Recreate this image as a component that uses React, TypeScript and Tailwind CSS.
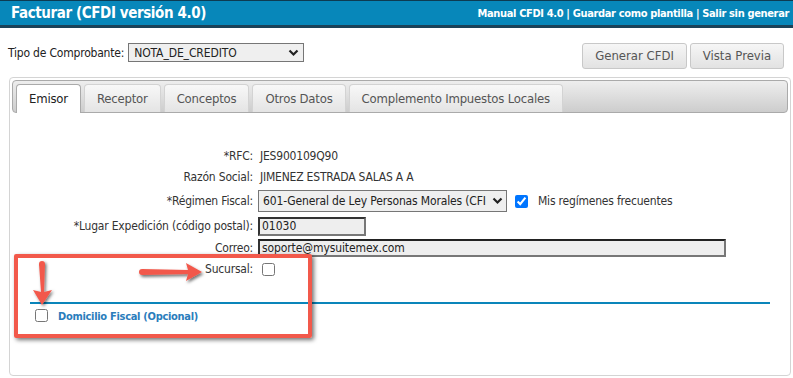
import React from "react";

const F = { fontFamily: "'DejaVu Sans Condensed', 'Noto Sans', sans-serif" };

function Chevron() {
  return (
    <svg width="11" height="8" viewBox="0 0 11 8">
      <path d="M1.5 1.5 L5.5 5.5 L9.5 1.5" fill="none" stroke="#222" strokeWidth="2.2" />
    </svg>
  );
}

function Row({ label, h, children }: { label: React.ReactNode; h: string; children?: React.ReactNode }) {
  return (
    <div className={`flex items-center gap-[5px] ${h}`}>
      <div className="w-[241px] shrink-0 text-right text-[12px] tracking-[-0.2px] text-[#333]">{label}</div>
      {children}
    </div>
  );
}

export default function App() {
  const tabs = ["Emisor", "Receptor", "Conceptos", "Otros Datos", "Complemento Impuestos Locales"];
  return (
    <div className="relative w-[793px] h-[378px] overflow-hidden bg-white" style={F}>
      {/* header */}
      <div className="h-[28px] flex items-center justify-between pl-[11px] pr-[4px] bg-[#0787ba] border-t border-[#0d3b52] border-b-[3px] border-b-[#1b4258]">
        <div className="text-white font-bold text-[15px] tracking-[-0.4px] leading-none">Facturar (CFDI versión 4.0)</div>
        <div className="text-white font-bold text-[11px] tracking-[-0.35px] leading-none">
          Manual CFDI 4.0 | Guardar como plantilla | Salir sin generar
        </div>
      </div>

      {/* top row */}
      <div className="flex justify-between h-[49px] pl-[8px] pr-[9px]">
        <div className="flex items-center gap-[4px] h-[39px] pt-[10px]">
          <span className="text-[12px] tracking-[-0.2px] text-[#222]">Tipo de Comprobante:</span>
          <div className="w-[176px] h-[19px] flex items-center justify-between pl-[5px] pr-[4px] bg-[#efefef] border border-[#767676] text-[12px] tracking-[-0.1px] text-[#222]">
            <span>NOTA_DE_CREDITO</span>
            <Chevron />
          </div>
        </div>
        <div className="flex gap-[3px] pt-[15px]">
          <div className="w-[105px] h-[26px] flex items-center justify-center rounded-[3px] border border-[#c8c8c8] bg-gradient-to-b from-[#f6f6f6] to-[#e2e2e2] text-[13px] text-[#555]">
            Generar CFDI
          </div>
          <div className="w-[94px] h-[26px] flex items-center justify-center rounded-[3px] border border-[#c8c8c8] bg-gradient-to-b from-[#f6f6f6] to-[#e2e2e2] text-[13px] text-[#555]">
            Vista Previa
          </div>
        </div>
      </div>

      {/* panel */}
      <div className="ml-[9px] w-[782px] h-[299px] border border-[#d4d4d4] rounded-[4px] p-[2px]">
        <div className="h-[33px] flex items-end gap-[3px] pl-[3px] rounded-[4px] border border-[#aaaaaa] bg-gradient-to-b from-[#eeeeee] to-[#cdcdcd]">
          {tabs.map((t, i) =>
            i === 0 ? (
              <div
                key={t}
                className="h-[29px] -mb-px px-[12px] flex items-center rounded-t-[4px] border border-b-0 border-[#aaaaaa] bg-white text-[13px] tracking-[-0.2px] text-[#222]"
              >
                {t}
              </div>
            ) : (
              <div
                key={t}
                className="h-[28px] px-[12px] flex items-center rounded-t-[4px] border border-b-0 border-[#d3d3d3] bg-gradient-to-b from-[#f8f8f8] to-[#e4e4e4] text-[13px] tracking-[-0.2px] text-[#555]"
              >
                {t}
              </div>
            )
          )}
        </div>

        <div className="pt-[33px]">
          <Row label="*RFC:" h="h-[20px]">
            <span className="pl-[2px] text-[12px] tracking-[-0.2px] text-[#333]">JES900109Q90</span>
          </Row>
          <Row label="Razón Social:" h="h-[22px]">
            <span className="pl-[2px] text-[12px] tracking-[-0.2px] text-[#333]">JIMENEZ ESTRADA SALAS A A</span>
          </Row>
          <Row label="*Régimen Fiscal:" h="h-[26px]">
            <div className="w-[249px] h-[22px] flex items-center justify-between pl-[4px] pr-[3px] bg-[#efefef] border border-[#767676] text-[12px] tracking-[-0.15px] text-[#222] overflow-hidden whitespace-nowrap">
              <span className="overflow-hidden">601-General de Ley Personas Morales (CFI</span>
              <Chevron />
            </div>
            <input type="checkbox" defaultChecked className="ml-[3px] w-[13px] h-[13px] accent-[#0075ff]" />
            <span className="ml-[5px] text-[12px] tracking-[-0.2px] text-[#333]">Mis regímenes frecuentes</span>
          </Row>
          <Row label="*Lugar Expedición (código postal):" h="h-[24px]">
            <div className="w-[108px] h-[19px] flex items-center pl-[2px] bg-[#eeeeee] border-2 border-t-[#333] border-l-[#333] border-r-[#777] border-b-[#777] text-[12px] text-[#222]">
              01030
            </div>
          </Row>
          <Row label="Correo:" h="h-[20px]">
            <div className="w-[468px] h-[18px] flex items-center pl-[2px] bg-[#eeeeee] border-2 border-t-[#222] border-l-[#333] border-r-[#777] border-b-[#777] text-[12px] tracking-[-0.1px] text-[#222]">
              soporte@mysuitemex.com
            </div>
          </Row>
          <Row label="Sucursal:" h="h-[22px]">
            <input type="checkbox" className="ml-[4px] w-[13px] h-[13px]" />
          </Row>

          <div className="mt-[22px] mx-[18px] h-[2px] bg-[#0a85ba]" />
          <div className="flex items-center h-[26px] pl-[23px]">
            <input type="checkbox" className="w-[13px] h-[13px] -mt-[4px]" />
            <span className="ml-[10px] text-[11px] font-bold tracking-[-0.3px] text-[#2a7dbc]">Domicilio Fiscal (Opcional)</span>
          </div>
        </div>
      </div>

      {/* annotation box */}
      <div className="absolute left-[14px] top-[254px] w-[298px] h-[84px] border-4 border-[#f2594b] rounded-[2px] shadow-[2px_2px_4px_rgba(0,0,0,0.55)]" />

      {/* arrows */}
      <svg className="absolute left-[130px] top-[258px]" width="84" height="30" viewBox="0 0 84 30">
        <defs>
          <filter id="sh" x="-20%" y="-40%" width="140%" height="180%">
            <feDropShadow dx="1.5" dy="2" stdDeviation="1.5" floodColor="#000" floodOpacity="0.55" />
          </filter>
        </defs>
        <g filter="url(#sh)">
          <path d="M12 11 L58 12 L56 5 L72 14 L56 23 L58 16 L12 17 Z" fill="#f2594b" strokeLinejoin="round" />
          <circle cx="12" cy="14" r="3" fill="#f2594b" />
        </g>
      </svg>
      <svg className="absolute left-[26px] top-[256px]" width="34" height="56" viewBox="0 0 34 56">
        <defs>
          <filter id="sh2" x="-40%" y="-20%" width="180%" height="140%">
            <feDropShadow dx="1.5" dy="1.5" stdDeviation="1.5" floodColor="#000" floodOpacity="0.55" />
          </filter>
        </defs>
        <g filter="url(#sh2)">
          <path d="M13 8 L19 8 L18 36 L26 34 L16 49 L7 34 L15 36 Z" fill="#f2594b" strokeLinejoin="round" />
          <circle cx="16" cy="8" r="3" fill="#f2594b" />
        </g>
      </svg>
    </div>
  );
}
